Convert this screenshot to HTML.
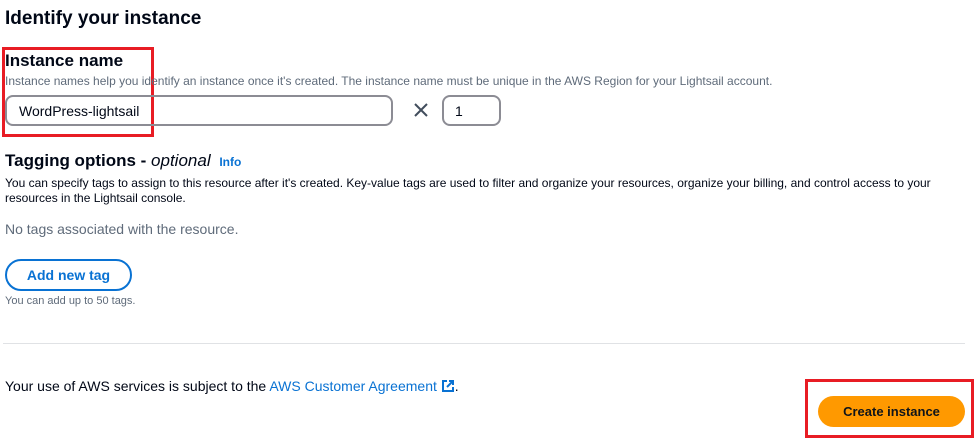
<!DOCTYPE html>
<html><head><style>
body{margin:0;width:980px;height:440px;background:#fff;font-family:"Liberation Sans",sans-serif;color:#000716;position:relative;overflow:hidden}
.a{position:absolute;white-space:nowrap}
</style></head><body>
<div class="a" style="left:5px;top:8px;font-size:19px;font-weight:bold">Identify your instance</div>
<div class="a" style="left:2px;top:47px;width:146px;height:84px;border:3px solid #e81c24"></div>
<div class="a" style="left:5px;top:51px;font-size:17px;font-weight:bold">Instance name</div>
<div class="a" style="left:5px;top:74px;font-size:12px;color:#5f6b7a">Instance names help you identify an instance once it's created. The instance name must be unique in the AWS Region for your Lightsail account.</div>
<div class="a" style="left:5px;top:95px;width:384px;height:27px;border:2px solid #8c8c94;border-radius:8px"></div>
<div class="a" style="left:19px;top:103px;font-size:14px">WordPress-lightsail</div>
<svg class="a" style="left:414px;top:103px" width="14" height="14" viewBox="0 0 14 14"><path d="M1 1L13 13M13 1L1 13" stroke="#414d5c" stroke-width="2"/></svg>
<div class="a" style="left:442px;top:95px;width:55px;height:27px;border:2px solid #8c8c94;border-radius:8px"></div>
<div class="a" style="left:455px;top:103px;font-size:14px">1</div>
<div class="a" style="left:5px;top:151px;font-size:17px;font-weight:bold">Tagging options - <i style="font-weight:normal">optional</i> <span style="font-size:12px;color:#0972d3;margin-left:4px">Info</span></div>
<div class="a" style="left:5px;top:176px;font-size:12px;color:#000716;line-height:14.5px;white-space:normal;width:960px">You can specify tags to assign to this resource after it's created. Key-value tags are used to filter and organize your resources, organize your billing, and control access to your resources in the Lightsail console.</div>
<div class="a" style="left:5px;top:221px;font-size:14px;color:#5f6b7a">No tags associated with the resource.</div>
<div class="a" style="left:5px;top:259px;width:123px;height:28px;border:2px solid #0972d3;border-radius:16px;text-align:center;line-height:28px;font-size:14px;font-weight:bold;color:#0972d3">Add new tag</div>
<div class="a" style="left:5px;top:295px;font-size:11px;color:#5f6b7a">You can add up to 50 tags.</div>
<div class="a" style="left:3px;top:343px;width:962px;height:1px;background:#e0e2e5"></div>
<div class="a" style="left:5px;top:378px;font-size:14px">Your use of AWS services is subject to the <span style="color:#0972d3">AWS Customer Agreement</span> <svg width="14" height="14" viewBox="0 0 14 14" style="vertical-align:-2px"><path d="M6 2H2V12H12V8M8 2H12V6M12 2L6 8" fill="none" stroke="#0972d3" stroke-width="2"/></svg>.</div>
<div class="a" style="left:805px;top:379px;width:163px;height:53px;border:3px solid #e81c24"></div>
<div class="a" style="left:818px;top:396px;width:147px;height:31px;background:#ff9900;border-radius:16px;text-align:center;line-height:31px;font-size:13px;font-weight:bold;color:#0f141a">Create instance</div>
</body></html>
